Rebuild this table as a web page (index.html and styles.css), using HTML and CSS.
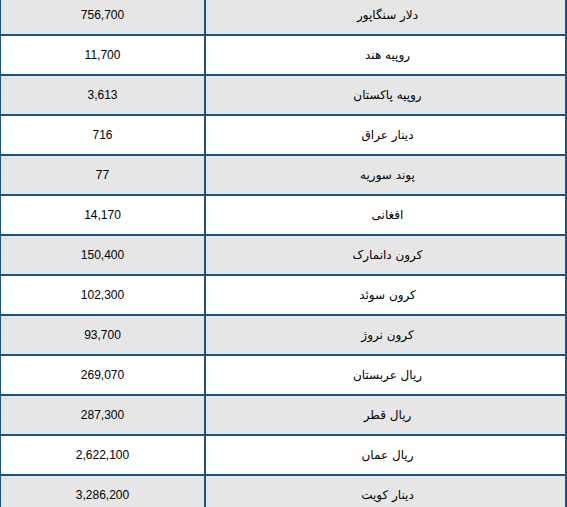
FILE: index.html
```html
<!DOCTYPE html>
<html lang="fa">
<head>
<meta charset="utf-8">
<title>نرخ ارز</title>
<link rel="stylesheet" href="styles.css">
</head>
<body>
<table class="rates">
<tbody>
<tr class="odd"><td class="num">756,700</td><td class="name" dir="rtl">دلار سنگاپور</td></tr>
<tr><td class="num">11,700</td><td class="name" dir="rtl">روپیه هند</td></tr>
<tr class="odd"><td class="num">3,613</td><td class="name" dir="rtl">روپیه پاکستان</td></tr>
<tr><td class="num">716</td><td class="name" dir="rtl">دینار عراق</td></tr>
<tr class="odd"><td class="num">77</td><td class="name" dir="rtl">پوند سوریه</td></tr>
<tr><td class="num">14,170</td><td class="name" dir="rtl">افغانی</td></tr>
<tr class="odd"><td class="num">150,400</td><td class="name" dir="rtl">کرون دانمارک</td></tr>
<tr><td class="num">102,300</td><td class="name" dir="rtl">کرون سوئد</td></tr>
<tr class="odd"><td class="num">93,700</td><td class="name" dir="rtl">کرون نروژ</td></tr>
<tr><td class="num">269,070</td><td class="name" dir="rtl">ریال عربستان</td></tr>
<tr class="odd"><td class="num">287,300</td><td class="name" dir="rtl">ریال قطر</td></tr>
<tr><td class="num">2,622,100</td><td class="name" dir="rtl">ریال عمان</td></tr>
<tr class="odd"><td class="num">3,286,200</td><td class="name" dir="rtl">دینار کویت</td></tr>
</tbody>
</table>
</body>
</html>
```
FILE: styles.css
```css
html, body {
  margin: 0;
  padding: 0;
  background: #ffffff;
  overflow: hidden;
}
.rates {
  border-collapse: separate;
  border-spacing: 0;
  table-layout: fixed;
  width: 568px;
  margin: -4px 0 0 -1px;
  font-family: "Liberation Sans", "DejaVu Sans", sans-serif;
  font-size: 12px;
  color: #000000;
}
.rates td {
  height: 38px;
  padding: 0;
  text-align: center;
  vertical-align: middle;
  border-bottom: 2px solid #1d5283;
  border-right: 2px solid #1d5283;
  box-sizing: content-box;
}
.rates td.num {
  width: 203px;
  border-left: 2px solid #1d5283;
}
.rates td.name {
  width: 359px;
  font-family: "DejaVu Sans", sans-serif;
  font-size: 12px;
}
.rates tr.odd td {
  background: #e6e6e6;
}
```
